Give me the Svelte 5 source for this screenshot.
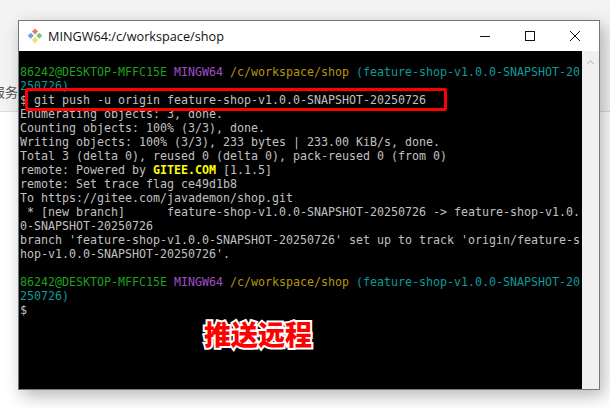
<script>
	const cmd = 'git push -u origin feature-shop-v1.0.0-SNAPSHOT-20250726';
	const branch = 'feature-shop-v1.0.0-SNAPSHOT-20';
	const newBranch = ' * [new branch]      feature-shop-v1.0.0-SNAPSHOT-20250726 -> feature-shop-v1.0.';
</script>

<div class="page">
	<span class="behind">报务</span>
	<div class="rule"></div>

	<div class="window">
		<div class="titlebar">
			<svg class="logo" width="16" height="16" viewBox="0 0 16 16">
				<path d="M8 0.5 L11 3.5 L8 6.5 L5 3.5 Z" fill="#e8776a" />
				<path d="M3.8 4.7 L6.8 7.7 L3.8 10.7 L0.6 7.7 Z" fill="#6aa5ea" />
				<path d="M12.2 4.7 L15.4 7.7 L12.2 10.7 L9.2 7.7 Z" fill="#7ac77a" />
				<path d="M8 9 L11 12 L8 15.2 L5 12 Z" fill="#f2dc62" />
			</svg>
			<span class="title">MINGW64:/c/workspace/shop</span>
			<div class="controls">
				<svg width="12" height="12" viewBox="0 0 12 12"><path d="M1 6.5 H11" stroke="#111" /></svg>
				<svg width="12" height="12" viewBox="0 0 12 12"><rect x="1.5" y="1.5" width="9" height="9" fill="none" stroke="#111" /></svg>
				<svg width="12" height="12" viewBox="0 0 12 12"><path d="M1 1 L11 11 M11 1 L1 11" stroke="#111" /></svg>
			</div>
		</div>
		<div class="body">
			<div class="term">
				<div class="line"><span class="green">86242@DESKTOP-MFFC15E</span> <span class="purple">MINGW64</span> <span class="yellow">/c/workspace/shop</span> <span class="cyan">({branch}</span></div>
				<div class="line cyan">250726)</div>
				<div class="line">$ {cmd}</div>
				<div class="line">Enumerating objects: 3, done.</div>
				<div class="line">Counting objects: 100% (3/3), done.</div>
				<div class="line">Writing objects: 100% (3/3), 233 bytes | 233.00 KiB/s, done.</div>
				<div class="line">Total 3 (delta 0), reused 0 (delta 0), pack-reused 0 (from 0)</div>
				<div class="line">remote: Powered by <b>GITEE.COM</b> [1.1.5]</div>
				<div class="line">remote: Set trace flag ce49d1b8</div>
				<div class="line">To https://gitee.com/javademon/shop.git</div>
				<div class="line">{newBranch}</div>
				<div class="line">0-SNAPSHOT-20250726</div>
				<div class="line">branch 'feature-shop-v1.0.0-SNAPSHOT-20250726' set up to track 'origin/feature-s</div>
				<div class="line">hop-v1.0.0-SNAPSHOT-20250726'.</div>
				<div class="line">&nbsp;</div>
				<div class="line"><span class="green">86242@DESKTOP-MFFC15E</span> <span class="purple">MINGW64</span> <span class="yellow">/c/workspace/shop</span> <span class="cyan">({branch}</span></div>
				<div class="line cyan">250726)</div>
				<div class="line">$</div>
			</div>
			<div class="scrollbar">
				<svg width="17" height="12" viewBox="0 0 17 12"><path d="M4.5 8 L8.5 4 L12.5 8 L11 8 L8.5 5.7 L6 8 Z" fill="#c4c4c4" /></svg>
			</div>
		</div>
		<div class="redbox"></div>
		<div class="note">推送远程</div>
	</div>
</div>

<style>
	:global(body) {
		margin: 0;
	}

	.page {
		position: relative;
		width: 610px;
		height: 408px;
		padding: 20px 0 0 18px;
		box-sizing: border-box;
		overflow: hidden;
		background: linear-gradient(#f3f3f3 0, #f3f3f3 111px, #fff 112px);
	}

	.behind {
		position: absolute;
		left: -8px;
		top: 82px;
		font: 13px "Noto Sans CJK SC", sans-serif;
		color: #555;
	}

	.rule {
		position: absolute;
		left: 0;
		right: 0;
		top: 111px;
		height: 1px;
		background: #dcdcdc;
	}

	.window {
		position: relative;
		width: 582px;
		height: 370px;
		box-sizing: border-box;
		border: 1px solid #777;
		background: #fff;
		display: flex;
		flex-direction: column;
		box-shadow: 4px 6px 16px rgba(0, 0, 0, 0.28);
	}

	.titlebar {
		height: 30px;
		display: flex;
		align-items: center;
		padding-left: 8px;
		flex: none;
	}

	.logo {
		margin-right: 5px;
	}

	.title {
		font: 12.7px "Open Sans", "Liberation Sans", sans-serif;
		color: #111;
	}

	.controls {
		margin-left: auto;
		display: flex;
		gap: 33px;
		padding-right: 18px;
	}

	.body {
		flex: 1;
		display: flex;
		min-height: 0;
	}

	.term {
		flex: 1;
		background: #000;
		padding: 14px 0 0 1px;
		color: #c0c0c0;
		font: 11.63px/14px "DejaVu Sans Mono", monospace;
		overflow: hidden;
	}

	.line {
		height: 14px;
		white-space: pre;
	}

	.green { color: #1fa01f; }
	.purple { color: #a04fc8; }
	.yellow { color: #b8960a; }
	.cyan { color: #0e9a9a; }

	b {
		color: #ffff00;
		font-weight: bold;
	}

	.scrollbar {
		width: 17px;
		flex: none;
		background: #f0f0f0;
		padding-top: 3px;
		box-sizing: border-box;
	}

	.redbox {
		position: absolute;
		left: 6px;
		top: 67px;
		width: 416px;
		height: 17px;
		border: 3px solid #f00;
		border-radius: 2px;
	}

	.note {
		position: absolute;
		left: 185px;
		top: 295px;
		font: 900 27px/36px "Noto Sans CJK SC", sans-serif;
		color: #f00;
		-webkit-text-stroke: 4px #fff;
		paint-order: stroke fill;
	}
</style>
